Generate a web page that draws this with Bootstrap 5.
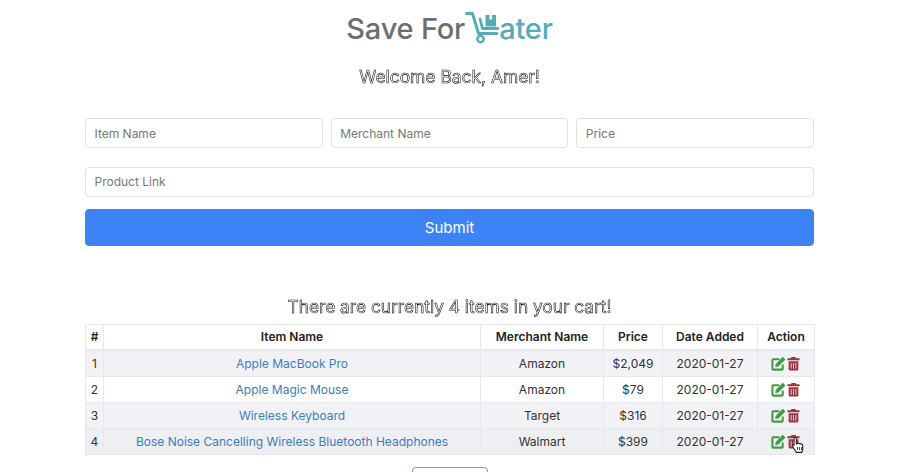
<!DOCTYPE html>
<html lang="en">
<head>
<meta charset="utf-8">
<title>Save For Later</title>
<link rel="stylesheet" href="https://cdn.jsdelivr.net/npm/bootstrap@5.3.0/dist/css/bootstrap.min.css">
<style>
html,body{height:472px;overflow:hidden}
body{font-family:Inter,"Liberation Sans",sans-serif;background:#fff;color:#333;padding-right:19px}
.page-wrap{width:729px;margin:0 auto}
.logo-line{height:58px;padding-top:10px;font-size:29px;line-height:38px;font-weight:500;color:#6d6e70;letter-spacing:-.2px}
.logo-line .tealpart{color:#55abb6}
.logo-cart{width:34px;height:34px;vertical-align:-5px}
.hollow{color:#fff;-webkit-text-stroke:.55px #000;font-weight:400;margin:0;filter:contrast(1.01)}
.welcome-h{font-size:17.4px;line-height:22px;margin-top:8px;margin-bottom:30px}
.cart-h{font-size:17.3px;line-height:22px;margin-top:50px;margin-bottom:6px}
.fld{height:30px;min-height:0;padding:0 8.5px;font-size:12px;border-color:#dfe1e4;border-radius:4px}
.fld::placeholder{color:#777}
.field-row{--bs-gutter-x:8px;margin-bottom:18.5px}
.go-btn{height:37px;padding:2px 0 0;margin-top:12.5px;font-size:15px;background:#3d83f7;border-color:#3d83f7;border-radius:4px}
.cart-table{table-layout:fixed;width:729px;font-size:12px;margin:0;border-color:#e7e8ea;--bs-table-striped-bg:#f2f2f6;--bs-table-color:#333;--bs-table-striped-color:#333}
.cart-table th,.cart-table td{height:25.6px;padding:0 2px;vertical-align:middle;line-height:20px;text-align:center;white-space:nowrap}
.cart-table td{height:26px;padding-top:2px}
.cart-table th{font-weight:600;color:#222}
.cart-table thead th{border-bottom:2px solid #e7e8ea}
.cart-table a{color:#3c7dbd;text-decoration:none}
.last-row td{background:#eeeff3}
.ico{width:15px;height:15px;vertical-align:-3px}
.act-cell{position:relative}
.hand{position:absolute;left:33px;top:7px;width:14px;height:19px}
.logout-wrap{margin-top:12px}
.logout-btn{width:76px;height:34px;border:1px solid #a98a90;border-radius:4px;background:#fff;padding:0}
</style>
</head>
<body>
<div class="page-wrap">
  <div class="logo-line text-center">Save For<svg class="logo-cart" viewBox="0 0 34 34"><g fill="none" stroke="#55abb6" stroke-linecap="round" stroke-linejoin="round"><path d="M1.500 3.500H7.500L13.500 23.500H32" stroke-width="3"/><path d="M15 9l2.500 9.500H33" stroke-width="2.800"/><circle cx="15.500" cy="29" r="3.200" stroke-width="2.400"/></g><path d="M20.500 5h4v4.500h2.500V5h4v11.500h-10.500z" fill="#55abb6"/></svg><span class="tealpart">ater</span></div>
  <h5 class="hollow welcome-h text-center">Welcome Back, Amer!</h5>
  <form>
    <div class="row field-row">
      <div class="col-4"><input class="form-control fld" placeholder="Item Name"></div>
      <div class="col-4"><input class="form-control fld" placeholder="Merchant Name"></div>
      <div class="col-4"><input class="form-control fld" placeholder="Price"></div>
    </div>
    <input class="form-control fld" placeholder="Product Link">
    <button type="button" class="btn btn-primary go-btn w-100">Submit</button>
  </form>
  <h5 class="hollow cart-h text-center">There are currently 4 items in your cart!</h5>
  <table class="table table-bordered table-striped cart-table">
    <colgroup><col style="width:18px"><col style="width:377px"><col style="width:123px"><col style="width:59px"><col style="width:95px"><col style="width:57px"></colgroup>
    <thead><tr><th>#</th><th>Item Name</th><th>Merchant Name</th><th>Price</th><th>Date Added</th><th>Action</th></tr></thead>
    <tbody>
      <tr><td>1</td><td><a href="#">Apple MacBook Pro</a></td><td>Amazon</td><td>$2,049</td><td>2020-01-27</td><td><svg class="ico" viewBox="0 0 16 16"><use href="#ed"/></svg><svg class="ico" viewBox="0 0 16 16"><use href="#tr"/></svg></td></tr>
      <tr><td>2</td><td><a href="#">Apple Magic Mouse</a></td><td>Amazon</td><td>$79</td><td>2020-01-27</td><td><svg class="ico" viewBox="0 0 16 16"><use href="#ed"/></svg><svg class="ico" viewBox="0 0 16 16"><use href="#tr"/></svg></td></tr>
      <tr><td>3</td><td><a href="#">Wireless Keyboard</a></td><td>Target</td><td>$316</td><td>2020-01-27</td><td><svg class="ico" viewBox="0 0 16 16"><use href="#ed"/></svg><svg class="ico" viewBox="0 0 16 16"><use href="#tr"/></svg></td></tr>
      <tr class="last-row"><td>4</td><td><a href="#">Bose Noise Cancelling Wireless Bluetooth Headphones</a></td><td>Walmart</td><td>$399</td><td>2020-01-27</td><td class="act-cell"><svg class="ico" viewBox="0 0 16 16"><use href="#ed"/></svg><svg class="ico" viewBox="0 0 16 16"><use href="#tr"/></svg><svg class="hand" viewBox="0 0 14 19"><path d="M4 1.500c.8 0 1.300.6 1.300 1.400v5l.8-.2c.6-.9 1.600-.7 2 0 .7-.5 1.600-.2 1.800.5.8-.3 1.800.2 1.800 1.200v3.500c0 1.500-.5 2.500-1 3.500H5.500L1.500 10.500c-.7-1 .4-2.200 1.500-1.500l0 .5V2.900c0-.8.200-1.400 1-1.400z" fill="#fff" stroke="#222" stroke-width="1.100" stroke-linejoin="round"/><path d="M6.500 11v3M8.500 11v3M10.500 11v3" stroke="#222" stroke-width=".8"/></svg></td></tr>
    </tbody>
  </table>
  <div class="logout-wrap text-center"><button type="button" class="logout-btn"></button></div>
</div>
<svg width="0" height="0" class="d-block"><defs>
<g id="ed"><path d="M12.500 9v4.500a1 1 0 0 1-1 1h-9a1 1 0 0 1-1-1v-9a1 1 0 0 1 1-1h6.500" fill="none" stroke="#3f9b45" stroke-width="2.200"/><path d="M5 8.500 12.600 .9l2.800 2.800L7.800 11.300l-3.300.5z" fill="#3f9b45"/></g>
<g id="tr"><path d="M1.500 2.500H5L6 1h4l1 1.500h3.500V4.500h-13z" fill="#9c3540"/><path d="M2.800 5.500h10.400v8.500a1.500 1.500 0 0 1-1.500 1.500H4.300a1.500 1.500 0 0 1-1.500-1.500z" fill="#9c3540"/><path d="M5.500 7.500v6M8 7.500v6M10.500 7.500v6" stroke="#e6d5d8" stroke-width="1"/></g>
</defs></svg>
</body>
</html>
